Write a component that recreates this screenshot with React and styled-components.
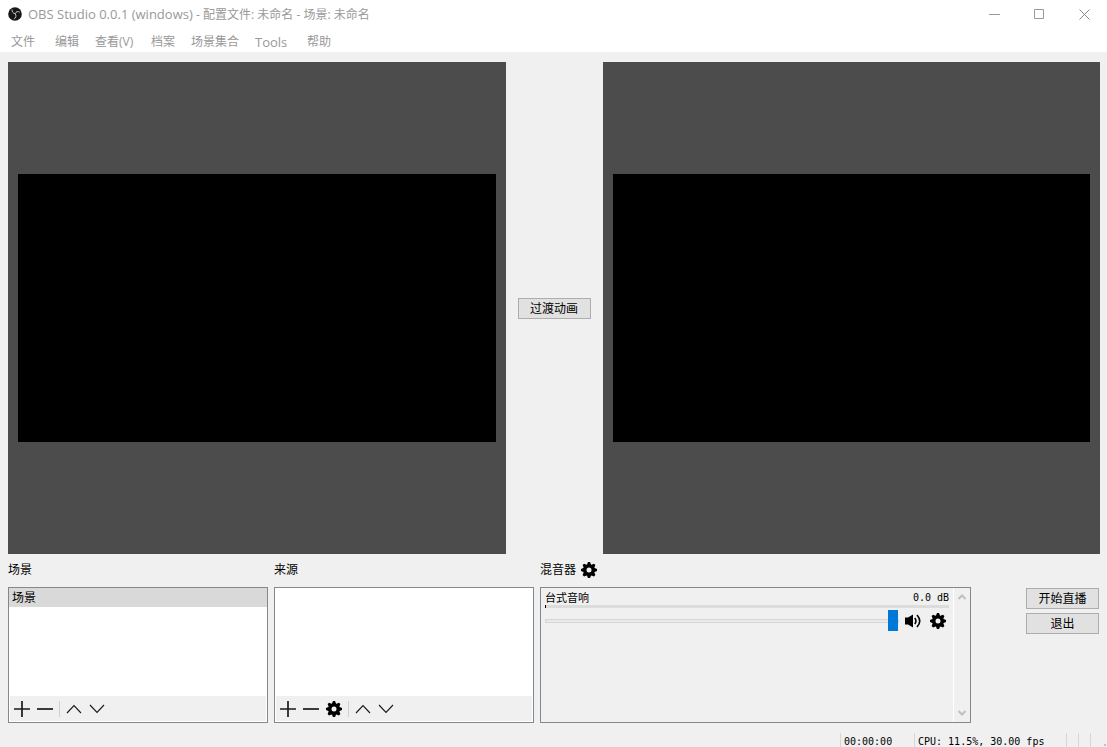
import React, { useState } from 'react';
import styled, { createGlobalStyle } from 'styled-components';

const GlobalStyle = createGlobalStyle`
  * {
    box-sizing: border-box;
  }

  body {
    margin: 0;
    background-color: #f0f0f0;
    color: #000;
    font-family: 'Open Sans', 'Noto Sans CJK SC', sans-serif;
    font-size: 12px;
    line-height: 16px;
  }

  button,
  input {
    margin: 0;
    font: inherit;
    color: inherit;
  }
`;

const Window = styled.div`
  min-height: 100vh;
  display: flex;
  flex-direction: column;
`;

const TitleBar = styled.header`
  height: 28px;
  display: flex;
  align-items: center;
  padding-left: 8px;
  background-color: #fff;
  color: #999;
`;

const Title = styled.h1`
  flex: 1;
  margin: 0 0 0 6px;
  font-size: 12px;
  font-weight: normal;
  white-space: nowrap;
`;

const Latin = styled.span`
  font-size: 13px;
`;

const WindowButton = styled.button`
  width: 45px;
  height: 28px;
  display: flex;
  align-items: center;
  justify-content: center;
  padding: 0;
  border: none;
  background: none;
`;

const MenuBar = styled.nav`
  height: 24px;
  display: flex;
  align-items: center;
  padding: 4px 11px 0;
  background-color: #fff;
`;

const MenuItem = styled.a`
  width: ${props => props.$width}px;
  color: #999;
  text-decoration: none;
  white-space: nowrap;
`;

const Stage = styled.main`
  flex: 1;
  display: grid;
  grid-template-columns: 1fr 97px 1fr;
  padding: 10px 7px 0 8px;
`;

const Preview = styled.section`
  display: flex;
  align-items: center;
  padding: 10px;
  background-color: #4c4c4c;
`;

const Canvas = styled.div`
  flex: 1;
  aspect-ratio: 16 / 9;
  background-color: #000;
`;

const Transition = styled.div`
  display: flex;
  align-items: center;
  justify-content: center;
`;

const PushButton = styled.button`
  width: 73px;
  height: 21px;
  padding: 0;
  border: 1px solid #adadad;
  background-color: #e1e1e1;
  line-height: 20px;
  white-space: nowrap;
`;

const Docks = styled.div`
  display: grid;
  grid-template-columns: 260fr 260fr 431fr 122px;
  gap: 6px;
  padding: 0 8px;
`;

const Dock = styled.section`
  display: flex;
  flex-direction: column;
`;

const DockTitle = styled.h2`
  height: 32px;
  display: flex;
  align-items: center;
  gap: 5px;
  margin: 0 0 1px;
  font-size: 12px;
  font-weight: normal;
`;

const Frame = styled.div`
  height: 136px;
  display: flex;
  flex-direction: ${props => (props.$row ? 'row' : 'column')};
  border: 1px solid #828790;
  background-color: ${props => (props.$row ? '#f0f0f0' : '#fff')};
`;

const List = styled.ul`
  flex: 1;
  margin: 0;
  padding: 0;
  list-style: none;
`;

const ListItem = styled.li`
  height: 19px;
  padding: 2px 3px 1px;
  background-color: #d9d9d9;
`;

const ToolBar = styled.div`
  height: 25px;
  display: flex;
  align-items: center;
  margin: 0 1px 1px;
  background-color: #f0f0f0;
`;

const IconButton = styled.button`
  width: ${props => props.$width || 23}px;
  height: 22px;
  display: flex;
  align-items: center;
  justify-content: center;
  padding: 0;
  border: none;
  background: none;
`;

const Separator = styled.span`
  width: 1px;
  height: 16px;
  margin: 0 2px 0 3px;
  background-color: #d0d0d0;
`;

const Mixer = styled.div`
  flex: 1;
  padding: 3px 4px;
`;

const ChannelHead = styled.div`
  display: flex;
  justify-content: space-between;
  height: 14px;
  line-height: 14px;
  font-size: 11px;
`;

const Level = styled.output`
  font-family: 'DejaVu Sans Mono', 'Liberation Mono', monospace;
  font-size: 10px;
`;

const Meter = styled.div`
  height: 3px;
  border-left: 1px solid #000;
  background-color: #dcdcdc;
`;

const ChannelControls = styled.div`
  display: flex;
  align-items: center;
  height: 26px;
`;

const Slider = styled.input`
  flex: 1;
  min-width: 0;
  height: 21px;
  margin-right: 1px;
  appearance: none;
  background: none;

  &::-webkit-slider-runnable-track {
    height: 4px;
    border: 1px solid #d6d6d6;
    background-color: #e7eaea;
  }

  &::-webkit-slider-thumb {
    appearance: none;
    width: 10px;
    height: 21px;
    margin-top: -10px;
    background-color: #0078d7;
  }
`;

const ScrollBar = styled.div`
  width: 17px;
  display: flex;
  flex-direction: column;
  justify-content: space-between;
  border-left: 1px solid #fff;
`;

const ScrollButton = styled.button`
  width: 16px;
  height: 18px;
  display: flex;
  align-items: center;
  justify-content: center;
  padding: 0;
  border: none;
  background: none;
`;

const Controls = styled.div`
  display: flex;
  flex-direction: column;
  align-items: flex-end;
  gap: 4px;
  padding-top: 34px;
`;

const StatusBar = styled.footer`
  height: 14px;
  display: flex;
  justify-content: flex-end;
  margin-top: 10px;
  font-family: 'DejaVu Sans Mono', 'Liberation Mono', monospace;
  font-size: 10px;
  line-height: 18px;
  white-space: nowrap;
  overflow: hidden;
`;

const StatusCell = styled.span`
  width: ${props => props.$width}px;
  padding-left: ${props => (props.children ? 3 : 0)}px;
  border-left: 1px solid #d7d7d7;
`;

const SizeGrip = styled.span`
  width: 2px;
  height: 2px;
  align-self: flex-end;
  margin: 0 1px 1px 13px;
  background-color: #bfbfbf;
`;

const Icon = ({ size = 16, children }) => (
  <svg width={size} height={size} viewBox={`0 0 ${size} ${size}`} fill="none" stroke="#1a1a1a" aria-hidden="true">
    {children}
  </svg>
);

const PlusIcon = () => (
  <Icon>
    <path d="M0 8h16M8 0v16" strokeWidth="1.7" />
  </Icon>
);

const MinusIcon = () => (
  <Icon>
    <path d="M0 8h16" strokeWidth="1.7" />
  </Icon>
);

const UpIcon = () => (
  <Icon>
    <path d="M1 12l7-7.300 7 7.300" strokeWidth="1.150" />
  </Icon>
);

const DownIcon = () => (
  <Icon>
    <path d="M1 4l7 7.300 7-7.300" strokeWidth="1.150" />
  </Icon>
);

const GearIcon = () => (
  <svg width="16" height="16" viewBox="0 0 8 8" aria-hidden="true">
    <path d="M3.5 0l-.5 1.190c-.1.030-.190.080-.280.130l-1.190-.5-.720.720.5 1.190c-.050.1-.090.180-.130.280l-1.190.5v1l1.190.5c.040.1.080.180.130.280l-.5 1.190.720.720 1.190-.5c.090.040.180.090.280.130l.5 1.190h1l.5-1.190c.090-.040.190-.080.280-.130l1.190.5.720-.720-.5-1.190c.040-.090.090-.190.130-.280l1.190-.5v-1l-1.190-.5c-.030-.090-.080-.190-.130-.280l.5-1.190-.720-.720-1.190.5c-.090-.040-.190-.090-.280-.130l-.5-1.190h-1zm.5 2.750a1.250 1.250 0 1 1 0 2.500a1.250 1.250 0 1 1 0-2.500z" fillRule="evenodd" />
  </svg>
);

const SpeakerIcon = () => (
  <Icon>
    <path d="M0 4.500h3l5-3v13l-5-3h-3z" fill="#000" stroke="none" />
    <path d="M9.800 5q2.200 3 0 6M12 2q5.500 6 0 12" stroke="#000" strokeWidth="1.600" />
  </Icon>
);

const Logo = () => (
  <svg width="14" height="14" viewBox="0 0 14 14" fill="none" aria-hidden="true">
    <circle cx="7" cy="7" r="6.800" fill="#17171b" />
    <path d="M4 2.500c0 2.500 1.200 4 3.200 4.200M11.800 5.200c-2-1.200-3.800-.7-4.600 1.500M6 12c2-1.200 2.500-3.200 1.200-5.300" stroke="#c4c4c6" strokeWidth="1" />
  </svg>
);

const menus = [
  { label: '文件', width: 44 },
  { label: '编辑', width: 40 },
  { label: '查看(V)', width: 56 },
  { label: '档案', width: 40 },
  { label: '场景集合', width: 64 },
  { label: 'Tools', width: 52, latin: true },
  { label: '帮助', width: 40 },
];

const EditTools = ({ settings }) => (
  <ToolBar>
    <IconButton aria-label="添加"><PlusIcon /></IconButton>
    <IconButton aria-label="删除"><MinusIcon /></IconButton>
    {settings && <IconButton aria-label="设置"><GearIcon /></IconButton>}
    <Separator />
    <IconButton aria-label="上移"><UpIcon /></IconButton>
    <IconButton aria-label="下移"><DownIcon /></IconButton>
  </ToolBar>
);

const App = () => {
  const [volume, setVolume] = useState(100);

  return (
    <Window>
      <GlobalStyle />
      <TitleBar>
        <Logo />
        <Title>
          <Latin>OBS Studio 0.0.1 (windows) </Latin>- 配置文件: 未命名 - 场景: 未命名
        </Title>
        <WindowButton aria-label="最小化">
          <svg width="11" height="11" stroke="#999"><path d="M0 5.500h11" /></svg>
        </WindowButton>
        <WindowButton aria-label="最大化">
          <svg width="11" height="11" stroke="#999" fill="none"><path d="M.5.5h9v9h-9z" /></svg>
        </WindowButton>
        <WindowButton aria-label="关闭">
          <svg width="11" height="11" stroke="#888"><path d="M.5.5l10 10M10.500.5l-10 10" /></svg>
        </WindowButton>
      </TitleBar>
      <MenuBar>
        {menus.map(menu => (
          <MenuItem key={menu.label} href="#" $width={menu.width}>
            {menu.latin ? <Latin>{menu.label}</Latin> : menu.label}
          </MenuItem>
        ))}
      </MenuBar>

      <Stage>
        <Preview><Canvas /></Preview>
        <Transition>
          <PushButton>过渡动画</PushButton>
        </Transition>
        <Preview><Canvas /></Preview>
      </Stage>

      <Docks>
        <Dock>
          <DockTitle>场景</DockTitle>
          <Frame>
            <List>
              <ListItem>场景</ListItem>
            </List>
            <EditTools />
          </Frame>
        </Dock>
        <Dock>
          <DockTitle>来源</DockTitle>
          <Frame>
            <List />
            <EditTools settings />
          </Frame>
        </Dock>
        <Dock>
          <DockTitle>
            混音器
            <IconButton aria-label="混音器设置" $width={16}><GearIcon /></IconButton>
          </DockTitle>
          <Frame $row>
            <Mixer>
              <ChannelHead>
                <label htmlFor="volume">台式音响</label>
                <Level htmlFor="volume">0.0 dB</Level>
              </ChannelHead>
              <Meter />
              <ChannelControls>
                <Slider
                  id="volume"
                  type="range"
                  value={volume}
                  onChange={event => setVolume(Number(event.target.value))}
                />
                <IconButton aria-label="静音" $width={26}><SpeakerIcon /></IconButton>
                <IconButton aria-label="音频设置"><GearIcon /></IconButton>
              </ChannelControls>
            </Mixer>
            <ScrollBar>
              <ScrollButton aria-label="向上滚动">
                <svg width="8" height="6" fill="none" stroke="#bfbfbf" strokeWidth="2"><path d="M.5 5l3.500-3.500 3.500 3.500" /></svg>
              </ScrollButton>
              <ScrollButton aria-label="向下滚动">
                <svg width="8" height="6" fill="none" stroke="#bfbfbf" strokeWidth="2"><path d="M.5 1l3.500 3.500 3.500-3.500" /></svg>
              </ScrollButton>
            </ScrollBar>
          </Frame>
        </Dock>
        <Controls>
          <PushButton>开始直播</PushButton>
          <PushButton>退出</PushButton>
        </Controls>
      </Docks>

      <StatusBar>
        <StatusCell $width={74}>00:00:00</StatusCell>
        <StatusCell $width={152}>CPU: 11.5%, 30.00 fps</StatusCell>
        <StatusCell $width={12} />
        <StatusCell $width={12} />
        <StatusCell $width={1} />
        <SizeGrip />
      </StatusBar>
    </Window>
  );
};

export default App;
